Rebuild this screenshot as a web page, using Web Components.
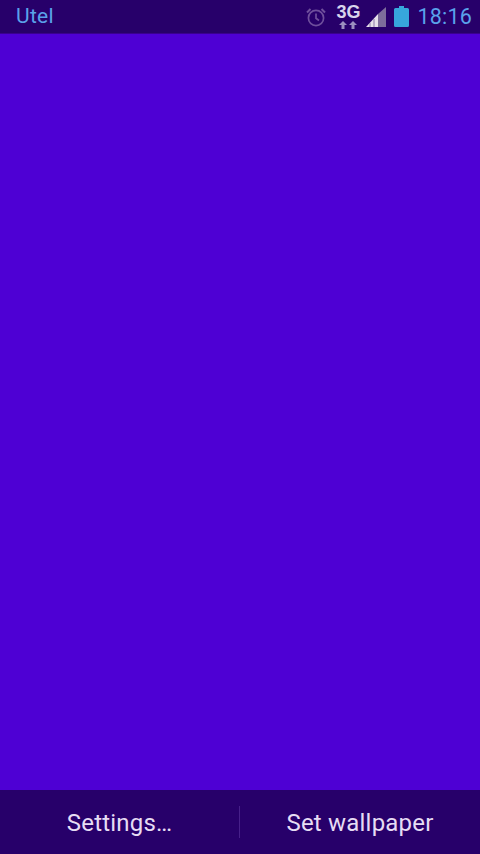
<!DOCTYPE html>
<html>
<head>
<meta charset="utf-8">
<style>
  html, body { margin: 0; height: 100%; background: #4e00d4; }
  body { width: 480px; height: 854px; overflow: hidden; display: flex; flex-direction: column; font-family: Roboto, "Liberation Sans", sans-serif; }
  wallpaper-preview { flex: 1; }
</style>
</head>
<body>
<status-bar carrier="Utel" time="18:16"></status-bar>
<wallpaper-preview></wallpaper-preview>
<action-bar>
  <action-button>Settings…</action-button>
  <action-sep></action-sep>
  <action-button>Set wallpaper</action-button>
</action-bar>

<script>
// Top status bar
class StatusBar extends HTMLElement {
    constructor() {
        super();
        const shadow = this.attachShadow({ mode: 'open' });
        shadow.innerHTML = `
            <style>
                :host {
                    display: flex;
                    align-items: center;
                    height: 33px;
                    padding: 0 8px 0 16px;
                    background: #27006a;
                    box-shadow: 0 1px 0 #3a0090;
                    flex: none;
                    position: relative;
                }
                .carrier { color: #5aa2ea; font-size: 21px; flex: 1; line-height: 35px; letter-spacing: .3px; }
                .icons { display: flex; align-items: center; }
                .time { color: #5aa2ea; font-size: 21.5px; margin-left: 8px; letter-spacing: .2px; line-height: 35px; }
                svg { display: block; }
                .net { position: relative; width: 26px; height: 28px; margin-left: 8px; }
                .net b { position: absolute; left: 0; top: 0; width: 26px; text-align: center; color: #d8d4ec; font: 700 18px/18px "Liberation Sans", sans-serif; }
                .net svg { position: absolute; left: 3px; top: 18px; }
            </style>
            <span class="carrier">${this.getAttribute('carrier')}</span>
            <div class="icons">
                <svg width="22" height="22" viewBox="0 0 22 22" fill="none" stroke="#6f4f9c" stroke-width="1.7">
                    <circle cx="11" cy="12" r="7.6"/>
                    <path d="M11 7.5V12.3L14 14.5"/>
                    <path d="M2 6.5 5.5 3M20 6.5 16.5 3" stroke-width="2"/>
                </svg>
                <div class="net">
                    <b>3G</b>
                    <svg width="20" height="8" viewBox="0 0 20 8" fill="#9c8fbf">
                        <path d="M5 0 9 4H6.500V8H3.500V4H1Z"/>
                        <path d="M15 0 19 4H16.500V8H13.500V4H11Z"/>
                    </svg>
                </div>
                <svg width="22" height="22" viewBox="0 0 22 22" style="margin-left:4px">
                    <path d="M1 21 13 8V21Z" fill="#e6e0ea"/>
                    <path d="M13 8 21 1V21H13Z" fill="#7d6d9b"/>
                    <path d="M5 17V21M9 13V21" stroke="#8a78a8" stroke-width="1"/>
                </svg>
                <svg width="15" height="21" viewBox="0 0 15 21" style="margin-left:7px">
                    <path d="M5 0H10V2H13.500Q15 2 15 3.500V19.500Q15 21 13.500 21H1.500Q0 21 0 19.500V3.500Q0 2 1.500 2H5Z" fill="#37a6dc"/>
                </svg>
            </div>
            <span class="time">${this.getAttribute('time')}</span>
        `;
    }
}

// Plain colour area
class WallpaperPreview extends HTMLElement {
    constructor() {
        super();
        const shadow = this.attachShadow({ mode: 'open' });
        shadow.innerHTML = `<style>:host { display: block; background: #4e00d4; }</style>`;
    }
}

// Bottom bar holding two buttons
class ActionBar extends HTMLElement {
    constructor() {
        super();
        const shadow = this.attachShadow({ mode: 'open' });
        shadow.innerHTML = `
            <style>
                :host {
                    display: grid;
                    grid-template-columns: 239px 1px 1fr;
                    align-items: center;
                    height: 64px;
                    background: #27006a;
                    flex: none;
                }
            </style>
            <slot></slot>
        `;
    }
}

class ActionSep extends HTMLElement {
    constructor() {
        super();
        const shadow = this.attachShadow({ mode: 'open' });
        shadow.innerHTML = `<style>:host { display: block; width: 1px; height: 32px; background: #47208a; }</style>`;
    }
}

class ActionButton extends HTMLElement {
    constructor() {
        super();
        const shadow = this.attachShadow({ mode: 'open' });
        shadow.innerHTML = `
            <style>
                :host {
                    display: block;
                    text-align: center;
                    color: #e6dcf4;
                    font-size: 24px;
                    line-height: 66px;
                    height: 64px;
                    letter-spacing: .2px;
                }
            </style>
            <slot></slot>
        `;
    }
}

customElements.define('action-sep', ActionSep);
customElements.define('action-button', ActionButton);
customElements.define('status-bar', StatusBar);
customElements.define('wallpaper-preview', WallpaperPreview);
customElements.define('action-bar', ActionBar);
</script>
</body>
</html>
